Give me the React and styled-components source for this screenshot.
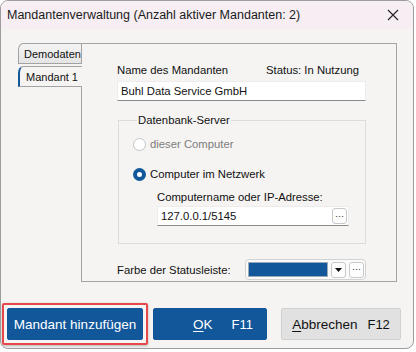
import React from "react";
import styled, { createGlobalStyle } from "styled-components";

const GlobalStyle = createGlobalStyle`
  body {
    margin: 0;
    background: #ffffff;
    font-family: "Liberation Sans", Arial, sans-serif;
  }
`;

const blue = "#13579b";

const Window = styled.div`
  width: 412px;
  height: 347px;
  border: 1px solid #9d9d9d;
  border-radius: 8px;
  background: #f5f4f2;
  overflow: hidden;
  display: flex;
  flex-direction: column;
  white-space: nowrap;
`;

const TitleBar = styled.div`
  height: 28px;
  display: flex;
  align-items: center;
  justify-content: space-between;
  padding: 0 14px 0 6px;
  background: #f6eef3;
  font-size: 12.5px;
  color: #1a1a1a;
`;

const CloseIcon = () => (
  <svg width="12" height="12" viewBox="0 0 12 12">
    <path d="M1 1L11 11M11 1L1 11" stroke="#222" strokeWidth="1.1" />
  </svg>
);

const Body = styled.div`
  padding: 14px 15px 0 17px;
  display: flex;
`;

const TabColumn = styled.div`
  width: 64px;
  display: flex;
  flex-direction: column;
`;

const Tab = styled.div`
  height: 19px;
  margin-bottom: ${(p) => (p.active ? "0" : "2px")};
  padding-left: ${(p) => (p.active ? "6px" : "5px")};
  display: flex;
  align-items: center;
  font-size: 11px;
  color: #111;
  border: 1px solid #a3a3a3;
  border-right: ${(p) => (p.active ? "none" : "1px solid #a3a3a3")};
  border-left: ${(p) => (p.active ? `2px solid ${blue}` : "1px solid #a3a3a3")};
  border-top-left-radius: 5px 7px;
  background: ${(p) =>
    p.active ? "#f5f4f2" : "linear-gradient(#f4f4f4, #e4e4e4)"};
`;

const TabFiller = styled.div`
  flex: 1;
  border-right: 1px solid #a3a3a3;
`;

const Panel = styled.div`
  width: 315px;
  height: 239px;
  box-sizing: border-box;
  border: 1px solid #a3a3a3;
  border-left: none;
  padding: 19px 0 0 35px;
  font-size: 11.3px;
  color: #111;
`;

const Column = styled.div`
  width: 249px;
  display: flex;
  flex-direction: column;
`;

const LabelRow = styled.div`
  display: flex;
  justify-content: space-between;
  padding-right: 7px;
  height: 14px;
  align-items: center;
`;

const TextInput = styled.div`
  margin-top: ${(p) => p.mt || "4px"};
  height: 20px;
  width: ${(p) => p.width || "100%"};
  box-sizing: border-box;
  background: #ffffff;
  border: 1px solid #ececec;
  border-bottom: 1px solid #8b8b8b;
  display: flex;
  align-items: center;
  justify-content: space-between;
  padding: 0 0 0 3px;
`;

const Group = styled.fieldset`
  margin: 13px 0 0 1px;
  padding: 11px 0 17px 14px;
  border: 1px solid #dcdcdc;
  min-width: 0;
`;

const Legend = styled.legend`
  padding: 0 1px;
  margin-left: 4px;
  font-size: 11.3px;
  color: #111;
`;

const RadioRow = styled.label`
  display: flex;
  align-items: center;
  gap: 4px;
  height: 14px;
  margin-bottom: ${(p) => p.gap || "0"};
  color: ${(p) => (p.disabled ? "#7d7d7d" : "#111")};
`;

const RadioDot = styled.span`
  width: 13px;
  height: 13px;
  box-sizing: border-box;
  border-radius: 50%;
  border: ${(p) => (p.checked ? `4px solid ${blue}` : "1px solid #c4c4c4")};
  background: #ffffff;
`;

const SubField = styled.div`
  padding-left: 24px;
  margin-top: 9px;
  display: flex;
  flex-direction: column;
`;

const SmallButton = styled.div`
  width: 15px;
  height: 16px;
  box-sizing: border-box;
  border: 1px solid #c9c9c9;
  border-radius: 3px;
  background: #fdfdfd;
  display: flex;
  align-items: center;
  justify-content: center;
  font-size: 9px;
  line-height: 1;
  color: #222;
  margin-right: ${(p) => p.mr || "0"};
`;

const ColorRow = styled.div`
  margin-top: 15px;
  display: flex;
  align-items: center;
  justify-content: space-between;
`;

const ColorPicker = styled.div`
  width: 121px;
  height: 21px;
  box-sizing: border-box;
  border: 1px solid #d2d2d2;
  border-radius: 4px;
  background: #fafafa;
  display: flex;
  align-items: center;
  gap: 3px;
  padding: 0 1px 0 2px;
`;

const Swatch = styled.div`
  width: 81px;
  height: 15px;
  background: ${(p) => p.color};
  border: 1px solid #9ab;
  box-sizing: border-box;
`;

const Footer = styled.div`
  margin-top: auto;
  padding: 0 11px 3px 1px;
  display: flex;
  align-items: center;
`;

const FocusRing = styled.div`
  padding: 3px;
  border: 2px solid #e5474b;
  border-radius: 2px;
  box-shadow: 0 1px 3px rgba(0, 0, 0, 0.25);
`;

const Button = styled.div`
  width: ${(p) => p.w};
  height: 32px;
  box-sizing: border-box;
  display: flex;
  align-items: center;
  justify-content: ${(p) => p.justify || "center"};
  gap: ${(p) => p.gap || "19px"};
  padding: ${(p) => p.pad || "0"};
  margin-left: ${(p) => p.ml || "0"};
  font-size: 13.5px;
  background: ${(p) => (p.primary ? blue : "#e1e1e1")};
  color: ${(p) => (p.primary ? "#ffffff" : "#111")};
  border: 1px solid ${(p) => (p.primary ? blue : "#d0d0d0")};
  border-radius: 2px;
`;

const Key = styled.span`
  font-size: 13px;
`;

const Under = styled.span`
  text-decoration: underline;
  text-underline-offset: 2px;
`;

export default function App() {
  return (
    <>
      <GlobalStyle />
      <Window>
        <TitleBar>
          <span>Mandantenverwaltung (Anzahl aktiver Mandanten: 2)</span>
          <CloseIcon />
        </TitleBar>
        <Body>
          <TabColumn>
            <Tab>Demodaten</Tab>
            <Tab active>Mandant 1</Tab>
            <TabFiller />
          </TabColumn>
          <Panel>
            <Column>
              <LabelRow>
                <span>Name des Mandanten</span>
                <span>Status: In Nutzung</span>
              </LabelRow>
              <TextInput>Buhl Data Service GmbH</TextInput>
              <Group>
                <Legend>Datenbank-Server</Legend>
                <RadioRow disabled gap="16px">
                  <RadioDot />
                  dieser Computer
                </RadioRow>
                <RadioRow>
                  <RadioDot checked />
                  Computer im Netzwerk
                </RadioRow>
                <SubField>
                  <LabelRow>Computername oder IP-Adresse:</LabelRow>
                  <TextInput width="192px" mt="2px">
                    127.0.0.1/5145
                    <SmallButton mr="1px">···</SmallButton>
                  </TextInput>
                </SubField>
              </Group>
              <ColorRow>
                <span>Farbe der Statusleiste:</span>
                <ColorPicker>
                  <Swatch color={blue} />
                  <SmallButton>
                    <svg width="7" height="4" viewBox="0 0 7 4">
                      <path d="M0 0H7L3.5 4Z" fill="#111" />
                    </svg>
                  </SmallButton>
                  <SmallButton>···</SmallButton>
                </ColorPicker>
              </ColorRow>
            </Column>
          </Panel>
        </Body>
        <Footer>
          <FocusRing>
            <Button primary w="136px">
              Mandant hinzufügen
            </Button>
          </FocusRing>
          <Button primary w="114px" ml="5px" justify="flex-end" pad="0 13px 0 0">
            <span>
              <Under>O</Under>K
            </span>
            <Key>F11</Key>
          </Button>
          <Button w="120px" ml="14px" gap="10px">
            <span>
              <Under>A</Under>bbrechen
            </span>
            <Key>F12</Key>
          </Button>
        </Footer>
      </Window>
    </>
  );
}
